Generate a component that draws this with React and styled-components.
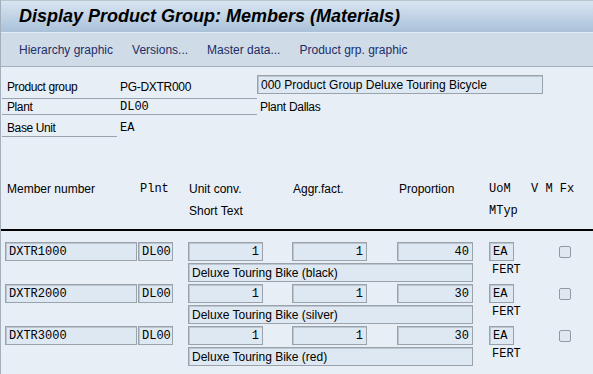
import styled, { createGlobalStyle } from "styled-components";

const sans = `"Liberation Sans", Arial, sans-serif`;
const mono = `"Liberation Mono", "DejaVu Sans Mono", monospace`;

const GlobalStyle = createGlobalStyle`
  html, body {
    margin: 0;
    padding: 0;
    background: #e8eef5;
  }
  body {
    font-family: ${sans};
  }
`;

const Screen = styled.div`
  width: 593px;
  height: 374px;
  overflow: hidden;
  box-sizing: border-box;
  background: #e8eef5;
  border-left: 1px solid #a3afbb;
  display: flex;
  flex-direction: column;
`;

const TitleBar = styled.div`
  height: 33px;
  box-sizing: border-box;
  border-top: 1px solid #b9c5d1;
  border-bottom: 1px solid #e4ecf4;
  background: linear-gradient(#d9e5f1, #a9c1d9);
  padding-left: 18px;
  display: flex;
  align-items: center;

  h1 {
    margin: 0;
    font: italic bold 18px ${sans};
    color: #000;
  }
`;

const Toolbar = styled.div`
  height: 34px;
  box-sizing: border-box;
  background: #cfdce8;
  border-bottom: 1px solid #9fb1c3;
  padding-left: 18px;
  display: flex;
  align-items: center;
  gap: 19px;
`;

const ToolItem = styled.span`
  font: 12px ${sans};
  color: #1d2d66;
`;

const Fields = styled.div`
  margin: 9px 0 0 1px;
  display: flex;
  flex-direction: column;
`;

const FieldRow = styled.div`
  display: grid;
  grid-template-columns: 115px 140px 286px;
  height: ${(p) => p.$h}px;
`;

const Label = styled.div`
  box-sizing: border-box;
  height: 100%;
  padding: ${(p) => p.$pt || 0}px 0 0 5px;
  border-bottom: 1px solid #97a3af;
  display: flex;
  align-items: center;
  font: 12px ${sans};
  letter-spacing: -0.4px;
  color: #000;
`;

const Value = styled.div`
  box-sizing: border-box;
  height: 100%;
  padding: ${(p) => p.$pt || 0}px 0 0 3px;
  border-bottom: ${(p) => (p.$line ? "1px solid #97a3af" : "none")};
  display: flex;
  align-items: center;
  font: ${(p) => (p.$mono ? `12px ${mono}` : `12px ${sans}`)};
  letter-spacing: ${(p) => (p.$mono ? "0" : "-0.3px")};
  color: #000;
`;

const Box = styled.div`
  box-sizing: border-box;
  height: 19px;
  width: ${(p) => p.$w}px;
  margin-top: ${(p) => p.$mt || 0}px;
  padding: 0 3px;
  border: 1px solid #9aa3ac;
  box-shadow: inset 1px 1px 0 #bcc6d0;
  background: #dde8f3;
  display: flex;
  align-items: center;
  justify-content: ${(p) => (p.$right ? "flex-end" : "flex-start")};
  font: ${(p) => (p.$mono ? `12px ${mono}` : `12px ${sans}`)};
  color: #000;
  white-space: nowrap;
  overflow: hidden;
`;

const Heading = styled.div`
  margin-top: 41px;
  padding: 0 0 7px 6px;
  border-bottom: 2px solid #000;
  display: grid;
  grid-template-columns: 133px 49px 104px 106px 90px 42px 1fr;
  grid-auto-rows: 22px;
  align-items: center;
`;

const HeadCell = styled.div`
  font: ${(p) => (p.$mono ? `12px ${mono}` : `12px ${sans}`)};
  white-space: pre;
  color: #000;
  grid-column: ${(p) => p.$col || "auto"};
`;

const Table = styled.div`
  margin-top: 11px;
  padding-left: 4px;
  display: flex;
  flex-direction: column;
`;

const MemberRow = styled.div`
  display: grid;
  grid-template-columns: 133px 50px 104px 105px 92px 70px 12px;
  grid-template-rows: 21px 21px;
  align-items: start;
`;

const ShortText = styled(Box)`
  grid-row: 2;
  grid-column: 3 / 6;
`;

const PlainMono = styled.div`
  grid-row: 2;
  grid-column: 6;
  padding-left: 3px;
  line-height: 19px;
  font: 12px ${mono};
  color: #000;
`;

const Check = styled.div`
  width: 12px;
  height: 12px;
  margin-top: 4px;
  box-sizing: border-box;
  border: 1px solid #8f9aa5;
  border-radius: 2px;
  background: #dfe8f1;
`;

const members = [
  { no: "DXTR1000", prop: "40", text: "Deluxe Touring Bike (black)" },
  { no: "DXTR2000", prop: "30", text: "Deluxe Touring Bike (silver)" },
  { no: "DXTR3000", prop: "30", text: "Deluxe Touring Bike (red)" },
];

export default function App() {
  return (
    <Screen>
      <GlobalStyle />
      <TitleBar>
        <h1>Display Product Group: Members (Materials)</h1>
      </TitleBar>
      <Toolbar>
        <ToolItem>Hierarchy graphic</ToolItem>
        <ToolItem>Versions...</ToolItem>
        <ToolItem>Master data...</ToolItem>
        <ToolItem>Product grp. graphic</ToolItem>
      </Toolbar>

      <Fields>
        <FieldRow $h={23}>
          <Label>Product group</Label>
          <Value $line>PG-DXTR000</Value>
          <Box $w={286} $mt={-1}>000 Product Group Deluxe Touring Bicycle</Box>
        </FieldRow>
        <FieldRow $h={16}>
          <Label>Plant</Label>
          <Value $line $mono>DL00</Value>
          <Value>Plant Dallas</Value>
        </FieldRow>
        <FieldRow $h={22}>
          <Label $pt={4}>Base Unit</Label>
          <Value $pt={4} $mono>EA</Value>
        </FieldRow>
      </Fields>

      <Heading>
        <HeadCell>Member number</HeadCell>
        <HeadCell $mono>Plnt</HeadCell>
        <HeadCell>Unit conv.</HeadCell>
        <HeadCell>Aggr.fact.</HeadCell>
        <HeadCell>Proportion</HeadCell>
        <HeadCell $mono>UoM</HeadCell>
        <HeadCell $mono>V M Fx</HeadCell>
        <HeadCell $col="3">Short Text</HeadCell>
        <HeadCell $mono $col="6">MTyp</HeadCell>
      </Heading>

      <Table>
        {members.map((m) => (
          <MemberRow key={m.no}>
            <Box $w={132} $mono>{m.no}</Box>
            <Box $w={35} $mono>DL00</Box>
            <Box $w={75} $mono $right>1</Box>
            <Box $w={75} $mono $right>1</Box>
            <Box $w={76} $mono $right>{m.prop}</Box>
            <Box $w={25} $mono>EA</Box>
            <Check />
            <ShortText $w={285}>{m.text}</ShortText>
            <PlainMono>FERT</PlainMono>
          </MemberRow>
        ))}
      </Table>
    </Screen>
  );
}
